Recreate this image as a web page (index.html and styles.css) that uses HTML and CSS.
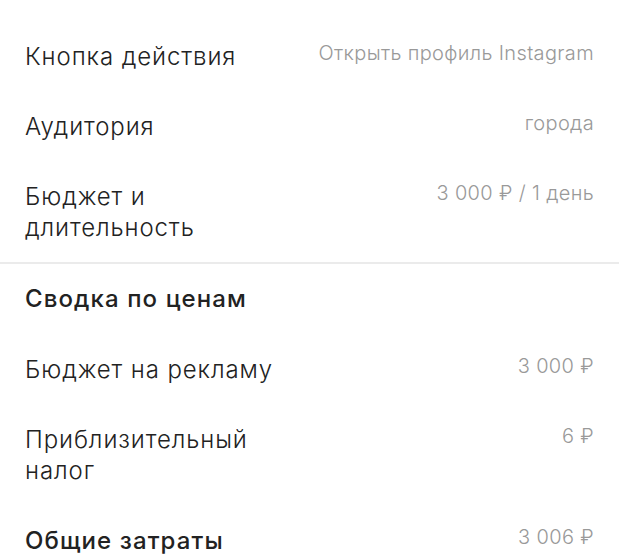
FILE: index.html
```html
<!DOCTYPE html>
<html lang="ru">

<head>
  <meta charset="UTF-8">
  <meta name="viewport" content="width=device-width, initial-scale=1.0">
  <title>Проверка рекламы</title>
  <link rel="stylesheet" href="styles.css">
</head>

<body>
  <div class="summary">
    <div class="row">
      <div class="label">Кнопка действия</div>
      <div class="value">Открыть профиль Instagram</div>
    </div>
    <div class="row">
      <div class="label">Аудитория</div>
      <div class="value">города</div>
    </div>
    <div class="row">
      <div class="label">Бюджет и длительность</div>
      <div class="value">3 000 ₽ / 1 день</div>
    </div>

    <div class="divider"></div>

    <div class="row head">
      <div class="label">Сводка по ценам</div>
    </div>
    <div class="row">
      <div class="label">Бюджет на рекламу</div>
      <div class="value">3 000 ₽</div>
    </div>
    <div class="row">
      <div class="label">Приблизительный налог</div>
      <div class="value">6 ₽</div>
    </div>
    <div class="row total">
      <div class="label">Общие затраты</div>
      <div class="value">3 006 ₽</div>
    </div>
  </div>
</body>

</html>
```

FILE: styles.css
```css
body {
  margin: 0;
  padding: 0;
  background-color: #fff;
  font-family: "Inter", "Roboto", "Liberation Sans", sans-serif;
  color: #222;
}

.summary {
  padding-top: 21px;
}

.row {
  display: flex;
  align-items: flex-start;
  justify-content: space-between;
  padding: 20px 25px 19px;
}

.label {
  width: 270px;
  flex-shrink: 0;
  font-size: 24px;
  line-height: 31px;
  font-weight: 300;
  letter-spacing: 0.9px;
}

.value {
  flex: 1;
  text-align: right;
  font-size: 20px;
  line-height: 24px;
  font-weight: 300;
  letter-spacing: 0.35px;
  color: #999;
}

/* полоса между настройками и ценами */
.divider {
  height: 2px;
  background-color: #ebebeb;
}

.head {
  padding-top: 19px;
  padding-bottom: 20px;
}

.head .label,
.total .label {
  font-weight: 500;
  letter-spacing: 1.1px;
}
```
